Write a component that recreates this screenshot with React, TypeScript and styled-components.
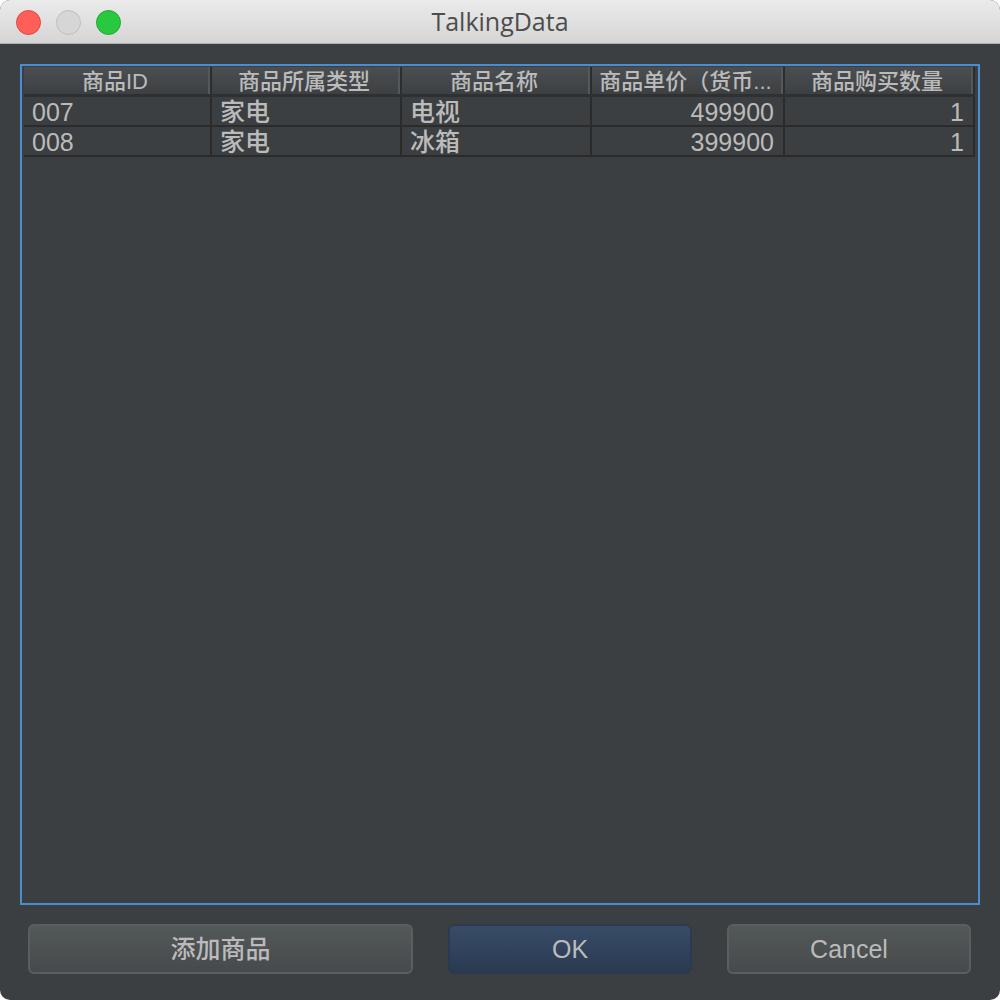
import styled, { createGlobalStyle } from 'styled-components';

const GlobalStyle = createGlobalStyle`
  html, body {
    margin: 0;
    padding: 0;
    background: #ffffff;
  }
  * {
    box-sizing: border-box;
  }
`;

const Window = styled.div`
  width: 1000px;
  height: 1000px;
  display: flex;
  flex-direction: column;
  border-radius: 10px;
  overflow: hidden;
  background: #3c3f41;
  font-family: 'Liberation Sans', 'Noto Sans CJK SC', sans-serif;
`;

const TitleBar = styled.div`
  position: relative;
  height: 44px;
  flex-shrink: 0;
  display: flex;
  align-items: center;
  justify-content: center;
  background: linear-gradient(to bottom, #ebebeb, #d5d5d5);
  border-bottom: 1px solid #b1b1b1;
`;

const Lights = styled.div`
  position: absolute;
  left: 16px;
  top: 10px;
  display: flex;
  gap: 15px;
`;

const Light = styled.span<{ $fill: string; $edge: string }>`
  width: 25px;
  height: 25px;
  border-radius: 50%;
  background: ${(p) => p.$fill};
  border: 1px solid ${(p) => p.$edge};
`;

const Title = styled.div`
  font-family: 'Open Sans', 'Liberation Sans', sans-serif;
  font-size: 25px;
  color: #4d4d4d;
  padding-bottom: 1px;
`;

const Body = styled.div`
  flex: 1;
  display: flex;
  flex-direction: column;
  padding: 20px 20px 27px 20px;
`;

const Panel = styled.div`
  height: 841px;
  flex-shrink: 0;
  border: 2px solid #4a8ed1;
  padding: 1px 2px 2px 2px;
  background: #3c3f41;
`;

const Grid = styled.div`
  display: grid;
  grid-template-columns: 188px 190px 190px 193px 190px;
`;

const HeadCell = styled.div`
  height: 30px;
  display: flex;
  align-items: center;
  justify-content: center;
  background: linear-gradient(to bottom, #4c4f52, #3d4042);
  border-bottom: 3px solid #2e3032;
  box-shadow: inset -2px 0 0 #2b2d2f, inset -4px 0 0 #55585a;
  font-size: 22px;
  line-height: 1;
  font-weight: 500;
  color: #bbbbbb;
  white-space: nowrap;
  overflow: hidden;
  padding: 2px 6px 0 0;
`;

const Cell = styled.div<{ $right?: boolean }>`
  height: 30px;
  display: flex;
  align-items: center;
  justify-content: ${(p) => (p.$right ? 'flex-end' : 'flex-start')};
  padding: 2px ${(p) => (p.$right ? '9px' : '8px')} 0 8px;
  border-right: 2px solid #2b2b2b;
  border-bottom: 2px solid #2b2b2b;
  font-size: 25px;
  line-height: 1;
  font-weight: 500;
  color: #bbbbbb;
  white-space: nowrap;
`;

const Actions = styled.div`
  display: flex;
  align-items: center;
  padding: 19px 8px 0 8px;
  gap: 35px;
`;

const Button = styled.button<{ $w: number; $primary?: boolean }>`
  width: ${(p) => p.$w}px;
  flex-shrink: 0;
  height: 50px;
  border-radius: 6px;
  border: 2px solid ${(p) => (p.$primary ? '#2b3a4f' : '#5a5e61')};
  background: ${(p) =>
    p.$primary
      ? 'linear-gradient(to bottom, #384c67, #2a3a51)'
      : 'linear-gradient(to bottom, #535859, #464a4c)'};
  color: #bbbbbb;
  font-family: 'Liberation Sans', 'Noto Sans CJK SC', sans-serif;
  font-size: 25px;
  font-weight: 500;
  line-height: 1;
  padding: 0;
`;

const columns = ['商品ID', '商品所属类型', '商品名称', '商品单价（货币...', '商品购买数量'];

const rows = [
  { id: '007', type: '家电', name: '电视', price: '499900', count: '1' },
  { id: '008', type: '家电', name: '冰箱', price: '399900', count: '1' },
];

export default function App() {
  return (
    <>
      <GlobalStyle />
      <Window>
        <TitleBar>
          <Lights>
            <Light $fill="#fe5f57" $edge="#e2463f" />
            <Light $fill="#d6d6d6" $edge="#bdbdbd" />
            <Light $fill="#28c840" $edge="#1ea932" />
          </Lights>
          <Title>TalkingData</Title>
        </TitleBar>
        <Body>
          <Panel>
            <Grid>
              {columns.map((c) => (
                <HeadCell key={c}>{c}</HeadCell>
              ))}
              {rows.flatMap((r) => [
                <Cell key={r.id + 'a'}>{r.id}</Cell>,
                <Cell key={r.id + 'b'}>{r.type}</Cell>,
                <Cell key={r.id + 'c'}>{r.name}</Cell>,
                <Cell key={r.id + 'd'} $right>
                  {r.price}
                </Cell>,
                <Cell key={r.id + 'e'} $right>
                  {r.count}
                </Cell>,
              ])}
            </Grid>
          </Panel>
          <Actions>
            <Button $w={385}>添加商品</Button>
            <Button $w={244} $primary>
              OK
            </Button>
            <Button $w={244}>Cancel</Button>
          </Actions>
        </Body>
      </Window>
    </>
  );
}
